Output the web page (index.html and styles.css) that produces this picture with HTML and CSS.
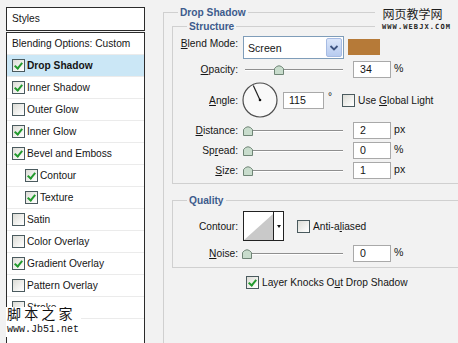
FILE: index.html
```html
<!DOCTYPE html>
<html>
<head>
<meta charset="utf-8">
<link rel="stylesheet" href="styles.css">
</head>
<body>
<div class="page">
  <div class="styles-panel">
    <div class="styles-head">Styles</div>
    <ul class="styles-list">
      <li class="row">Blending Options: Custom</li>
      <li class="row active"><span class="cb on"></span><b>Drop Shadow</b></li>
      <li class="row"><span class="cb on"></span>Inner Shadow</li>
      <li class="row"><span class="cb"></span>Outer Glow</li>
      <li class="row"><span class="cb on"></span>Inner Glow</li>
      <li class="row"><span class="cb on"></span>Bevel and Emboss</li>
      <li class="row sub"><span class="cb on"></span>Contour</li>
      <li class="row sub"><span class="cb on"></span>Texture</li>
      <li class="row"><span class="cb"></span>Satin</li>
      <li class="row"><span class="cb"></span>Color Overlay</li>
      <li class="row"><span class="cb on"></span>Gradient Overlay</li>
      <li class="row"><span class="cb"></span>Pattern Overlay</li>
      <li class="row"><span class="cb"></span>Stroke</li>
    </ul>
  </div>

  <div class="settings">
    <div class="group outer">
      <div class="group-title">Drop Shadow</div>

      <div class="group inner structure">
        <div class="group-title">Structure</div>

        <div class="field blend">
          <span class="label top"><u>B</u>lend Mode:</span>
          <div class="select">
            <span class="select-text">Screen</span>
            <span class="select-btn">
              <svg width="10" height="8" viewBox="0 0 10 8"><path d="M1.5 2 L5 5.5 L8.5 2" fill="none" stroke="#3d5380" stroke-width="1.8"/></svg>
            </span>
          </div>
          <span class="swatch"></span>
        </div>

        <div class="field opacity">
          <span class="label"><u>O</u>pacity:</span>
          <div class="slider">
            <span class="track"></span>
            <span class="thumb" style="left:31px"><svg width="10" height="11" viewBox="0 0 10 11"><path d="M0.5 4.5 Q5 -1 9.5 4.5 V10.5 H0.5 Z" fill="#c8dccc" stroke="#6f8576"/></svg></span>
          </div>
          <span class="num">34</span>
          <span class="unit">%</span>
        </div>

        <div class="field angle">
          <span class="label"><u>A</u>ngle:</span>
          <svg class="dial" width="36" height="36" viewBox="0 0 36 36">
            <circle cx="18" cy="18" r="17" fill="#f9f9f9" stroke="#4e4e4e" stroke-width="1.2"/>
            <line x1="18" y1="18" x2="11.3" y2="3.5" stroke="#222" stroke-width="1.2"/>
            <circle cx="18" cy="18" r="1.3" fill="#111"/>
          </svg>
          <span class="num wide">115</span>
          <span class="deg">°</span>
          <span class="cb gl"></span>
          <span class="cb-text">Use <u>G</u>lobal Light</span>
        </div>

        <div class="field dist">
          <span class="label"><u>D</u>istance:</span>
          <div class="slider">
            <span class="track"></span>
            <span class="thumb" style="left:0px"><svg width="10" height="11" viewBox="0 0 10 11"><path d="M0.5 4.5 Q5 -1 9.5 4.5 V10.5 H0.5 Z" fill="#c8dccc" stroke="#6f8576"/></svg></span>
          </div>
          <span class="num">2</span>
          <span class="unit">px</span>
        </div>

        <div class="field step">
          <span class="label">Sp<u>r</u>ead:</span>
          <div class="slider">
            <span class="track"></span>
            <span class="thumb" style="left:0px"><svg width="10" height="11" viewBox="0 0 10 11"><path d="M0.5 4.5 Q5 -1 9.5 4.5 V10.5 H0.5 Z" fill="#c8dccc" stroke="#6f8576"/></svg></span>
          </div>
          <span class="num">0</span>
          <span class="unit">%</span>
        </div>

        <div class="field step">
          <span class="label"><u>S</u>ize:</span>
          <div class="slider">
            <span class="track"></span>
            <span class="thumb" style="left:0px"><svg width="10" height="11" viewBox="0 0 10 11"><path d="M0.5 4.5 Q5 -1 9.5 4.5 V10.5 H0.5 Z" fill="#c8dccc" stroke="#6f8576"/></svg></span>
          </div>
          <span class="num">1</span>
          <span class="unit">px</span>
        </div>
      </div>

      <div class="group inner quality">
        <div class="group-title">Quality</div>

        <div class="field contour-row">
          <span class="label">Contour:</span>
          <div class="contour">
            <svg class="contour-preview" width="29" height="28" viewBox="0 0 29 28">
              <polygon points="0,28 29,2 29,28" fill="#c9c9c9"/>
            </svg>
            <span class="contour-arrow"><span class="tri"></span></span>
          </div>
          <span class="cb aa"></span>
          <span class="cb-text">Anti-a<u>l</u>iased</span>
        </div>

        <div class="field noise">
          <span class="label"><u>N</u>oise:</span>
          <div class="slider">
            <span class="track"></span>
            <span class="thumb" style="left:-1px"><svg width="10" height="11" viewBox="0 0 10 11"><path d="M0.5 4.5 Q5 -1 9.5 4.5 V10.5 H0.5 Z" fill="#c8dccc" stroke="#6f8576"/></svg></span>
          </div>
          <span class="num">0</span>
          <span class="unit">%</span>
        </div>
      </div>

      <div class="knock">
        <span class="cb on"></span>
        <span class="cb-text">Layer Knocks O<u>u</u>t Drop Shadow</span>
      </div>
    </div>
  </div>

  <div class="wm-top">
    <div class="wm-cn">网页教学网</div>
    <div class="wm-en">WWW.WEBJX.COM</div>
  </div>
  <div class="wm-bottom">
    <div class="wm-jb">脚 本 之 家</div>
    <div class="wm-url">www.Jb51.net</div>
  </div>
</div>
</body>
</html>
```

FILE: styles.css
```css
html, body {
  margin: 0;
  padding: 0;
}

body {
  background: #f2f2f2;
  font-family: "Liberation Sans", Arial, sans-serif;
  font-size: 10.2px;
  color: #151515;
}

.page {
  position: relative;
  width: 458px;
  height: 343px;
  overflow: hidden;
  display: flex;
}

/* ---------- left styles list ---------- */
.styles-panel {
  flex: none;
  width: 139px;
  margin-left: 6px;
  padding-top: 7px;
  display: flex;
  flex-direction: column;
}

.styles-head {
  height: 22px;
  line-height: 22px;
  border: 1px solid #2b2b2b;
  background: #fff;
  padding-left: 5px;
}

.styles-list {
  list-style: none;
  margin: 1px 0 0;
  padding: 0;
  flex: 1;
  border: 1px solid #2b2b2b;
  border-bottom: 0;
  background: #fff;
}

.row {
  height: 21px;
  border-bottom: 1px solid #ebebeb;
  display: flex;
  align-items: center;
  gap: 2px;
  padding-left: 5px;
  white-space: nowrap;
}

.row.sub {
  padding-left: 18px;
}

.row.active {
  background: #cbe7f6;
}

/* checkbox */
.cb {
  position: relative;
  flex: none;
  width: 11px;
  height: 11px;
  border: 1px solid #4a5a5e;
  background: linear-gradient(135deg, #dcdcd6 0%, #f6f6f4 70%, #ffffff 100%);
  display: inline-block;
}

.cb.on::after {
  content: "";
  position: absolute;
  left: 3px;
  top: 1px;
  width: 3px;
  height: 6px;
  border: solid #239a2e;
  border-width: 0 2px 2px 0;
  transform: rotate(40deg);
}

/* ---------- right settings ---------- */
.settings {
  flex: 1;
  min-width: 0;
  padding: 12px 0 0 18px;
}

.group {
  border: 1px solid #d0d0d0;
}

.outer {
  border-right: 0;
  border-bottom: 0;
  height: 400px;
}

.inner {
  border-right: 0;
  margin-left: 8px;
}

.structure {
  margin-top: 6px;
  padding-bottom: 4px;
}

.quality {
  margin-top: 16px;
  padding-bottom: 5px;
}

.group-title {
  width: fit-content;
  margin: -7px 0 0 14px;
  padding: 0 2px;
  line-height: 14px;
  background: #f2f2f2;
  color: #3d5b8c;
  font-weight: bold;
}

.field {
  display: flex;
  align-items: center;
  white-space: nowrap;
}

.label {
  flex: none;
  width: 65px;
  margin-right: 5px;
  text-align: right;
  line-height: 13px;
}

.label.top {
  align-self: flex-start;
  margin-top: 1px;
}

.blend {
  margin-top: 2px;
  align-items: flex-start;
}

.select {
  width: 99px;
  height: 21px;
  border: 1px solid #7f9db9;
  background: #fff;
  display: flex;
  align-items: center;
}

.select-text {
  flex: 1;
  padding-left: 4px;
  font-size: 10.6px;
}

.select-btn {
  width: 15px;
  height: 19px;
  margin-right: 1px;
  border: 1px solid #a6bbe3;
  border-radius: 2px;
  background: linear-gradient(#dbe6fa, #b7cbef);
  display: flex;
  align-items: center;
  justify-content: center;
  box-sizing: border-box;
  width: 16px;
}

.swatch {
  width: 32px;
  height: 16px;
  margin: 3px 0 0 4px;
  background: #b67a38;
}

.opacity {
  margin-top: 2px;
}

.slider {
  position: relative;
  width: 100px;
  height: 17px;
  display: flex;
  align-items: center;
}

.track {
  flex: 1;
  margin-left: 2px;
  height: 1px;
  background: #8f8f8f;
  border-bottom: 1px solid #fff;
}

.thumb {
  position: absolute;
  top: 3px;
  width: 10px;
  height: 11px;
  display: block;
}

.thumb svg {
  display: block;
}

.num {
  flex: none;
  width: 30px;
  height: 15px;
  line-height: 15px;
  margin-left: 10px;
  padding-left: 6px;
  border: 1px solid #a9a9a9;
  background: #fff;
  font-size: 10.6px;
}

.num.wide {
  width: 34px;
  margin-left: 5px;
  padding-left: 5px;
}

.unit {
  margin-left: 3px;
  margin-top: -3px;
  font-size: 10.6px;
}

.angle {
  margin-top: 4px;
  height: 36px;
}

.dial {
  flex: none;
  margin-left: -1px;
  display: block;
}

.deg {
  margin-left: 4px;
  margin-top: -8px;
}

.gl {
  margin-left: 10px;
}

.cb-text {
  margin-left: 3px;
}

.dist {
  margin-top: 4px;
}

.step {
  margin-top: 3px;
}

.contour-row {
  margin-top: 3px;
}

.contour {
  flex: none;
  width: 39px;
  height: 28px;
  border: 1px solid #222;
  background: #fff;
  display: flex;
}

.contour-preview {
  display: block;
  flex: none;
}

.contour-arrow {
  flex: 1;
  border-left: 1px solid #222;
  display: flex;
  align-items: center;
  justify-content: center;
}

.tri {
  width: 0;
  height: 0;
  border-left: 2.5px solid transparent;
  border-right: 2.5px solid transparent;
  border-top: 3px solid #111;
}

.aa {
  margin-left: 13px;
}

.noise {
  margin-top: 4px;
}

.noise .slider {
  margin-left: 0;
}

.knock {
  margin-top: 8px;
  padding-left: 82px;
  display: flex;
  align-items: center;
  white-space: nowrap;
}

/* ---------- watermarks ---------- */
.wm-top {
  position: absolute;
  left: 375px;
  top: 6px;
  width: 83px;
  height: 28px;
  background: #f2f2f2;
  text-align: center;
}

.wm-cn {
  font-family: "Noto Sans CJK SC", sans-serif;
  font-size: 12px;
  line-height: 15px;
  color: #1e1e1e;
  margin-left: -8px;
}

.wm-en {
  font-family: "DejaVu Sans Mono", monospace;
  font-weight: bold;
  font-size: 7px;
  line-height: 9px;
  letter-spacing: 1.1px;
  color: #1e1e1e;
  margin-top: 2px;
}

.wm-bottom {
  position: absolute;
  left: 6px;
  top: 305px;
}

.wm-jb {
  font-family: "Noto Sans CJK SC", sans-serif;
  font-size: 14px;
  line-height: 17px;
  color: #111;
  padding-left: 1px;
  background: linear-gradient(transparent 2px, #fff 2px);
  width: 74px;
}

.wm-url {
  font-family: "Liberation Mono", monospace;
  font-size: 10px;
  line-height: 15px;
  color: #111;
  background: #fff;
  width: 74px;
  padding-left: 1px;
}
```
